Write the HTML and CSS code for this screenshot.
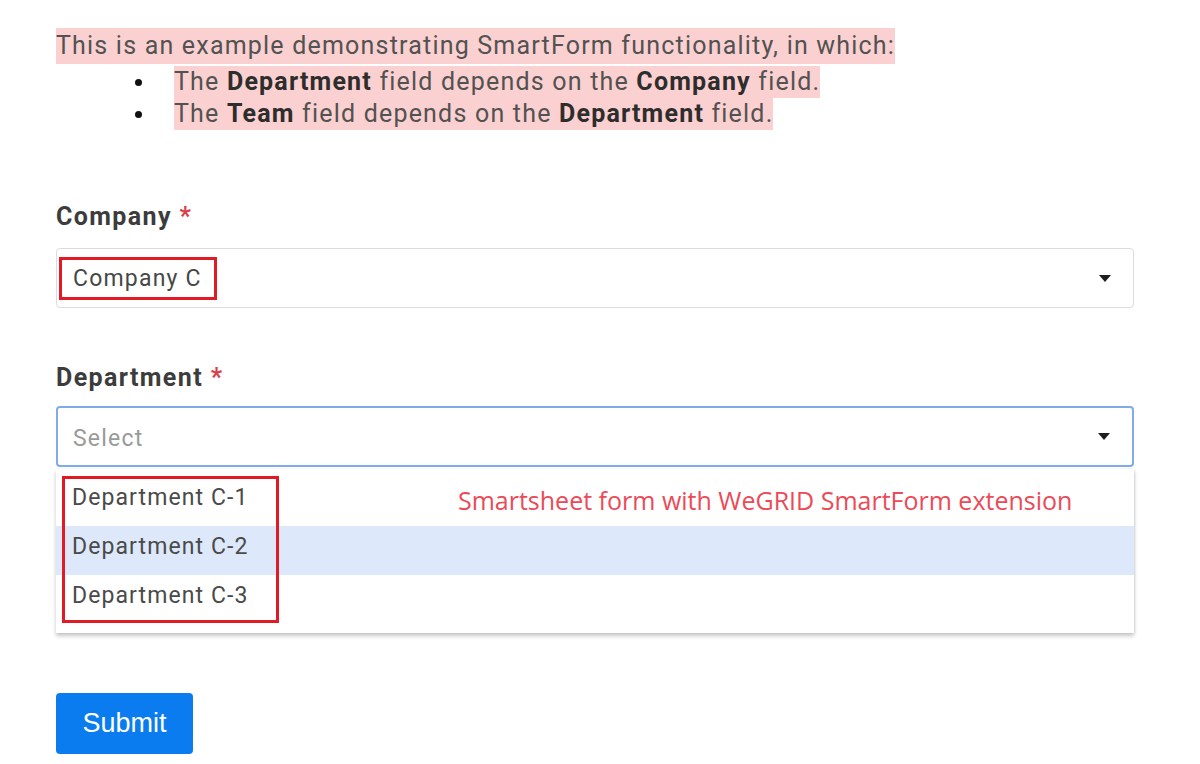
FILE: index.html
```html
<!DOCTYPE html>
<html>
<head>
<meta charset="utf-8">
<link rel="stylesheet" href="styles.css">
</head>
<body>
<div class="page">
  <div class="intro">
    <p class="lead"><span class="hl">This is an example demonstrating SmartForm functionality, in which:</span></p>
    <ul class="deps">
      <li><span class="hl">The <b>Department</b> field depends on the <b>Company</b> field.</span></li>
      <li><span class="hl">The <b>Team</b> field depends on the <b>Department</b> field.</span></li>
    </ul>
  </div>

  <div class="field field-company">
    <div class="label">Company <span class="req">*</span></div>
    <div class="select">
      <span class="value boxed">Company C</span>
      <span class="caret"></span>
    </div>
  </div>

  <div class="field field-dept">
    <div class="label">Department <span class="req">*</span></div>
    <div class="select focused">
      <span class="placeholder">Select</span>
      <span class="caret"></span>
    </div>
    <div class="menu">
      <div class="opt">Department C-1</div>
      <div class="opt active">Department C-2</div>
      <div class="opt">Department C-3</div>
      <div class="redbox"></div>
      <div class="note">Smartsheet form with WeGRID SmartForm extension</div>
    </div>
  </div>

  <button class="submit">Submit</button>
</div>
</body>
</html>
```

FILE: styles.css
```css
html, body {
  margin: 0;
  padding: 0;
  background: #ffffff;
}
.page {
  padding: 28px 66px 0 56px;
  font-family: Roboto, "Liberation Sans", sans-serif;
  color: #444;
}
.intro {
  font-size: 25px;
  letter-spacing: 1.2px;
  color: #525252;
}
.hl {
  display: inline-block;
  background: #fbd0d0;
}
.lead {
  margin: 0;
}
.lead .hl {
  height: 36px;
  line-height: 36px;
}
.deps {
  margin: 0;
  padding: 2px 0 0 117px;
  list-style: none;
}
.deps li {
  display: flex;
  align-items: center;
}
.deps li::before {
  content: "";
  width: 7px;
  height: 7px;
  border-radius: 50%;
  background: #111;
  margin: 0 32px 0 -38px;
  flex: none;
}
.deps li .hl {
  height: 32px;
  line-height: 32px;
}
.deps b {
  font-weight: 700;
  color: #2d2d2d;
}
.field-company {
  margin-top: 70px;
}
.field-dept {
  margin-top: 53px;
  position: relative;
}
.label {
  font-size: 25px;
  letter-spacing: 1.4px;
  font-weight: 700;
  color: #3c3c3c;
  height: 34px;
  line-height: 34px;
}
.req {
  color: #d8404a;
  font-weight: 700;
}
.select {
  margin-top: 14px;
  height: 60px;
  box-sizing: border-box;
  border: 1px solid #dcdcdc;
  border-radius: 4px;
  display: flex;
  align-items: center;
  padding: 0 16px;
  font-size: 23px;
  letter-spacing: 1.2px;
  position: relative;
}
.select.focused {
  margin-top: 11px;
  height: 61px;
  border: 2px solid #7fabea;
  padding: 4px 16px 0 15px;
}
.value {
  color: #474747;
}
.boxed {
  position: absolute;
  left: 2px;
  top: 8px;
  height: 43px;
  width: 158px;
  box-sizing: border-box;
  border: 3.5px solid #e11a24;
  display: flex;
  align-items: center;
  padding-left: 11px;
}
.placeholder {
  color: #9a9a9a;
}
.caret {
  margin-left: auto;
  margin-right: 6px;
  width: 0;
  height: 0;
  border-left: 6px solid transparent;
  border-right: 6px solid transparent;
  border-top: 7px solid #1e1e1e;
}
.focused .caret {
  margin-top: -4px;
}
.menu {
  position: relative;
  margin-top: 2px;
  background: #fff;
  box-shadow: 0 3px 4px rgba(0,0,0,0.22), 1px 0 2px rgba(0,0,0,0.08);
  padding: 8px 0 9px;
  height: 164px;
  box-sizing: border-box;
}
.opt {
  height: 49px;
  line-height: 42px;
  padding-left: 16px;
  font-size: 23px;
  letter-spacing: 1.1px;
  color: #4a4a4a;
}
.opt.active {
  background: #dde9fb;
}
.redbox {
  position: absolute;
  left: 6px;
  top: 7px;
  width: 217px;
  height: 147px;
  box-sizing: border-box;
  border: 3.5px solid #e11a24;
}
.note {
  position: absolute;
  left: 402px;
  top: 14px;
  font-family: "Open Sans", "Liberation Sans", sans-serif;
  font-size: 25px;
  line-height: 34px;
  color: #ec4a57;
  white-space: nowrap;
}
.submit {
  margin-top: 60px;
  width: 137px;
  height: 61px;
  background: #0b7cf0;
  border: none;
  border-radius: 4px;
  color: #fff;
  font-family: "Liberation Sans", Arial, sans-serif;
  font-size: 27px;
  padding: 0;
}
```
